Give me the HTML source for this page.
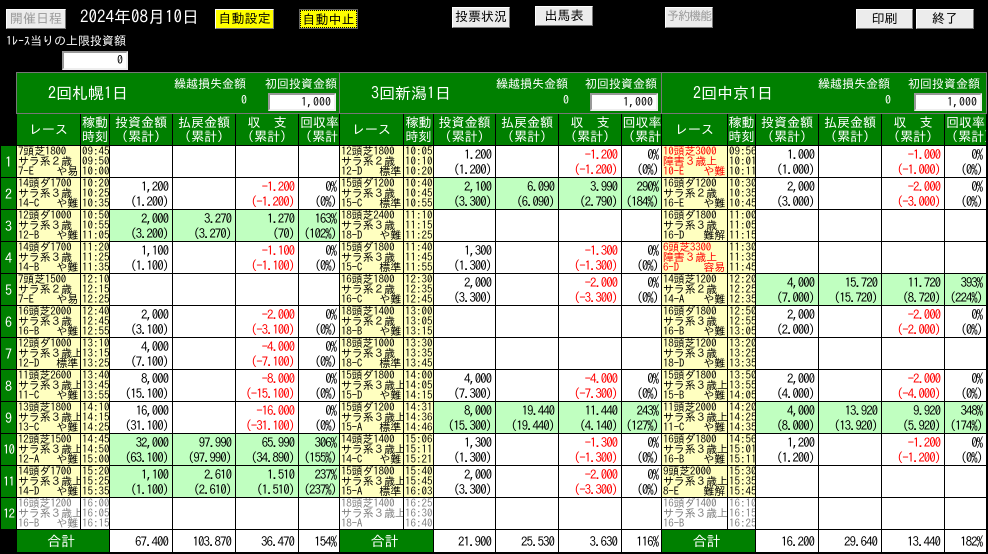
<!DOCTYPE html>
<html><head><meta charset="utf-8"><style>
body{margin:0;background:#000;width:988px;height:554px;overflow:hidden;position:relative;font-family:"IPAGothic","Noto Sans CJK JP",monospace;color:#000}
.a{position:absolute;white-space:nowrap}
.btn{position:absolute;background:#ececec;border:1px solid #fff;border-right-color:#777;border-bottom-color:#777;font-size:13px;text-align:center;line-height:17px;box-sizing:border-box;white-space:nowrap}
.inp{position:absolute;background:#fff;border:2px solid #999;border-right-color:#eee;border-bottom-color:#eee;box-sizing:border-box;text-align:right;font-size:12px;line-height:14px;padding-right:3px}
table.p{position:absolute;top:72px;border-collapse:collapse;table-layout:fixed}
td{border:1px solid #000;padding:0;overflow:hidden;white-space:nowrap;background:#fff}
tr.v td{background:#008000;height:40px;border:1px solid #777;position:relative;color:#fff}
tr.h td{background:#008000;color:#fff;height:31px;font-size:13px;line-height:14px;text-align:center}
tr.d td{height:31px;font-size:13px;letter-spacing:-1.1px;line-height:15px;text-align:right;padding-right:4px}
td.r{background:#ffffc0!important;font-size:11px!important;letter-spacing:-0.2px!important;line-height:10px!important;text-align:left!important;padding:0 0 0 1px!important;vertical-align:middle}
td.t{background:#ffffc0!important;font-size:11px!important;letter-spacing:0!important;line-height:10px!important;text-align:left!important;padding:0 0 0 1px!important;vertical-align:middle}
td.r i{float:right;font-style:normal;padding-right:2px}
tr.d td.g{background:#c0ffc0}
.e{color:#f00}
td.gy{color:#808080;background:#fff!important}
tr.tot td{height:22px;font-size:13px;letter-spacing:-1px;text-align:right;padding-right:4px}
tr.tot td.s{background:#008000;color:#fff;text-align:center;letter-spacing:0;font-size:14px}
table.n{position:absolute;left:0;top:145px;border-collapse:collapse}
table.n td{background:#008000;color:#fff;width:15px;height:31px;text-align:center;font-size:14px;padding:0}
</style></head><body>
<div class="btn" style="left:6px;top:9px;width:60px;height:20px;color:#999">開催日程</div>
<div class="a" style="left:80px;top:8px;color:#fff;font-size:17px;line-height:20px">2024年08月10日</div>
<div class="btn" style="left:215px;top:9px;width:59px;height:20px;background:#ff0">自動設定</div>
<div class="btn" style="left:300px;top:10px;width:57px;height:18px;background:#ff0;border:1px dotted #000;outline:1px solid #666">自動中止</div>
<div class="btn" style="left:452px;top:7px;width:58px;height:21px">投票状況</div>
<div class="btn" style="left:535px;top:6px;width:58px;height:20px">出馬表</div>
<div class="btn" style="left:665px;top:7px;width:48px;height:21px;color:#999;font-size:12px;letter-spacing:-1px">予約機能</div>
<div class="btn" style="left:856px;top:9px;width:57px;height:20px">印刷</div>
<div class="btn" style="left:916px;top:9px;width:58px;height:20px">終了</div>
<div class="a" style="left:6px;top:35px;color:#fff;font-size:12px">1ﾚｰｽ当りの上限投資額</div>
<div class="inp" style="left:62px;top:51px;width:66px;height:19px">0</div>

<table class="n"><tr><td>1</td></tr><tr><td>2</td></tr><tr><td>3</td></tr><tr><td>4</td></tr><tr><td>5</td></tr><tr><td>6</td></tr><tr><td>7</td></tr><tr><td>8</td></tr><tr><td>9</td></tr><tr><td style="font-size:13px;letter-spacing:-1px">10</td></tr><tr><td style="font-size:13px;letter-spacing:-1px">11</td></tr><tr><td style="font-size:13px;letter-spacing:-1px">12</td></tr></table>

<!-- Panel 1 -->
<table class="p" style="left:16px;width:324px">
<colgroup><col style="width:64px"><col style="width:29px"><col style="width:63px"><col style="width:63px"><col style="width:63px"><col style="width:42px"></colgroup>
<tr class="v"><td colspan="6"><div class="a" style="left:31px;top:12px;font-size:16px">2回札幌1日</div><div class="a" style="left:157px;top:5px;font-size:12px">繰越損失金額</div><div class="a" style="left:224px;top:21px;font-size:12px">0</div><div class="a" style="left:248px;top:5px;font-size:12px">初回投資金額</div><div class="inp" style="left:251px;top:20px;width:68px;height:18px;color:#000">1,000</div></td></tr>
<tr class="h"><td>レース</td><td>稼動<br>時刻</td><td>投資金額<br>（累計）</td><td>払戻金額<br>（累計）</td><td>収　支<br>（累計）</td><td>回収率<br>（累計）</td></tr>
<tr class="d"><td class="r">7頭芝1800<br>サラ系２歳<br>7-E<i>や易</i></td><td class="t">09:45<br>09:50<br>10:00</td><td></td><td></td><td></td><td></td></tr>
<tr class="d"><td class="r">14頭ダ1700<br>サラ系３歳<br>14-C<i>や難</i></td><td class="t">10:20<br>10:25<br>10:35</td><td>1,200<br>(1.200)</td><td></td><td class="e">-1.200<br>(-1.200)</td><td>0%<br>(0%)</td></tr>
<tr class="d"><td class="r">12頭ダ1000<br>サラ系３歳<br>12-B<i>や難</i></td><td class="t">10:50<br>10:55<br>11:05</td><td class="g">2,000<br>(3.200)</td><td class="g">3.270<br>(3.270)</td><td class="g">1.270<br>(70)</td><td class="g">163%<br>(102%)</td></tr>
<tr class="d"><td class="r">14頭ダ1700<br>サラ系３歳<br>14-B<i>や難</i></td><td class="t">11:20<br>11:25<br>11:35</td><td>1,100<br>(1.100)</td><td></td><td class="e">-1.100<br>(-1.100)</td><td>0%<br>(0%)</td></tr>
<tr class="d"><td class="r">7頭芝1500<br>サラ系２歳<br>7-E<i>や易</i></td><td class="t">12:10<br>12:15<br>12:25</td><td></td><td></td><td></td><td></td></tr>
<tr class="d"><td class="r">16頭芝2000<br>サラ系３歳<br>16-B<i>や難</i></td><td class="t">12:40<br>12:45<br>12:55</td><td>2,000<br>(3.100)</td><td></td><td class="e">-2.000<br>(-3.100)</td><td>0%<br>(0%)</td></tr>
<tr class="d"><td class="r">12頭ダ1000<br>サラ系３歳上<br>12-D<i>標準</i></td><td class="t">13:10<br>13:15<br>13:25</td><td>4,000<br>(7.100)</td><td></td><td class="e">-4.000<br>(-7.100)</td><td>0%<br>(0%)</td></tr>
<tr class="d"><td class="r">11頭芝2600<br>サラ系３歳上<br>11-C<i>や難</i></td><td class="t">13:40<br>13:45<br>13:55</td><td>8,000<br>(15.100)</td><td></td><td class="e">-8.000<br>(-15.100)</td><td>0%<br>(0%)</td></tr>
<tr class="d"><td class="r">13頭芝1800<br>サラ系３歳上<br>13-C<i>や難</i></td><td class="t">14:10<br>14:15<br>14:25</td><td>16,000<br>(31.100)</td><td></td><td class="e">-16.000<br>(-31.100)</td><td>0%<br>(0%)</td></tr>
<tr class="d"><td class="r">12頭芝1500<br>サラ系３歳上<br>12-A<i>や難</i></td><td class="t">14:45<br>14:50<br>15:00</td><td class="g">32,000<br>(63.100)</td><td class="g">97.990<br>(97.990)</td><td class="g">65.990<br>(34.890)</td><td class="g">306%<br>(155%)</td></tr>
<tr class="d"><td class="r">14頭ダ1700<br>サラ系３歳上<br>14-D<i>や難</i></td><td class="t">15:20<br>15:25<br>15:35</td><td class="g">1,100<br>(1.100)</td><td class="g">2.610<br>(2.610)</td><td class="g">1.510<br>(1.510)</td><td class="g">237%<br>(237%)</td></tr>
<tr class="d"><td class="r gy">16頭芝1200<br>サラ系３歳上<br>16-B<i>や難</i></td><td class="t gy">16:00<br>16:05<br>16:15</td><td></td><td></td><td></td><td></td></tr>
<tr class="tot"><td class="s" colspan="2">合計</td><td>67.400</td><td>103.870</td><td>36.470</td><td>154%</td></tr>
</table>

<!-- Panel 2 -->
<table class="p" style="left:339px;width:323px">
<colgroup><col style="width:64px"><col style="width:30px"><col style="width:62px"><col style="width:63px"><col style="width:63px"><col style="width:41px"></colgroup>
<tr class="v"><td colspan="6"><div class="a" style="left:31px;top:12px;font-size:16px">3回新潟1日</div><div class="a" style="left:156px;top:5px;font-size:12px">繰越損失金額</div><div class="a" style="left:223px;top:21px;font-size:12px">0</div><div class="a" style="left:245px;top:5px;font-size:12px">初回投資金額</div><div class="inp" style="left:250px;top:20px;width:68px;height:18px;color:#000">1,000</div></td></tr>
<tr class="h"><td>レース</td><td>稼動<br>時刻</td><td>投資金額<br>（累計）</td><td>払戻金額<br>（累計）</td><td>収　支<br>（累計）</td><td>回収率<br>（累計）</td></tr>
<tr class="d"><td class="r">12頭芝1800<br>サラ系２歳<br>12-D<i>標準</i></td><td class="t">10:05<br>10:10<br>10:20</td><td>1.200<br>(1.200)</td><td></td><td class="e">-1.200<br>(-1.200)</td><td>0%<br>(0%)</td></tr>
<tr class="d"><td class="r">15頭ダ1200<br>サラ系３歳<br>15-C<i>標準</i></td><td class="t">10:40<br>10:45<br>10:55</td><td class="g">2,100<br>(3.300)</td><td class="g">6.090<br>(6.090)</td><td class="g">3.990<br>(2.790)</td><td class="g">290%<br>(184%)</td></tr>
<tr class="d"><td class="r">18頭芝2400<br>サラ系３歳<br>18-D<i>や難</i></td><td class="t">11:10<br>11:15<br>11:25</td><td></td><td></td><td></td><td></td></tr>
<tr class="d"><td class="r">15頭ダ1800<br>サラ系３歳<br>15-C<i>標準</i></td><td class="t">11:40<br>11:45<br>11:55</td><td>1,300<br>(1.300)</td><td></td><td class="e">-1.300<br>(-1.300)</td><td>0%<br>(0%)</td></tr>
<tr class="d"><td class="r">16頭芝1800<br>サラ系２歳<br>16-C<i>や難</i></td><td class="t">12:30<br>12:35<br>12:45</td><td>2,000<br>(3.300)</td><td></td><td class="e">-2.000<br>(-3.300)</td><td>0%<br>(0%)</td></tr>
<tr class="d"><td class="r">18頭芝1400<br>サラ系２歳<br>18-B<i>や難</i></td><td class="t">13:00<br>13:05<br>13:15</td><td></td><td></td><td></td><td></td></tr>
<tr class="d"><td class="r">18頭芝1000<br>サラ系３歳<br>18-C<i>標準</i></td><td class="t">13:30<br>13:35<br>13:45</td><td></td><td></td><td></td><td></td></tr>
<tr class="d"><td class="r">15頭ダ1800<br>サラ系３歳上<br>15-D<i>や難</i></td><td class="t">14:00<br>14:05<br>14:15</td><td>4,000<br>(7.300)</td><td></td><td class="e">-4.000<br>(-7.300)</td><td>0%<br>(0%)</td></tr>
<tr class="d"><td class="r">15頭ダ1200<br>サラ系３歳上<br>15-A<i>標準</i></td><td class="t">14:31<br>14:36<br>14:46</td><td class="g">8,000<br>(15.300)</td><td class="g">19.440<br>(19.440)</td><td class="g">11.440<br>(4.140)</td><td class="g">243%<br>(127%)</td></tr>
<tr class="d"><td class="r">14頭芝1400<br>サラ系３歳上<br>14-C<i>や難</i></td><td class="t">15:06<br>15:11<br>15:21</td><td>1,300<br>(1.300)</td><td></td><td class="e">-1.300<br>(-1.300)</td><td>0%<br>(0%)</td></tr>
<tr class="d"><td class="r">15頭ダ1800<br>サラ系３歳上<br>15-A<i>標準</i></td><td class="t">15:40<br>15:45<br>16:03</td><td>2,000<br>(3.300)</td><td></td><td class="e">-2.000<br>(-3.300)</td><td>0%<br>(0%)</td></tr>
<tr class="d"><td class="r gy">18頭芝1400<br>サラ系３歳上<br>18-A</td><td class="t gy">16:25<br>16:30<br>16:40</td><td></td><td></td><td></td><td></td></tr>
<tr class="tot"><td class="s" colspan="2">合計</td><td>21.900</td><td>25.530</td><td>3.630</td><td>116%</td></tr>
</table>

<!-- Panel 3 -->
<table class="p" style="left:661px;width:325px">
<colgroup><col style="width:66px"><col style="width:28px"><col style="width:63px"><col style="width:63px"><col style="width:63px"><col style="width:42px"></colgroup>
<tr class="v"><td colspan="6"><div class="a" style="left:31px;top:12px;font-size:16px">2回中京1日</div><div class="a" style="left:156px;top:5px;font-size:12px">繰越損失金額</div><div class="a" style="left:223px;top:21px;font-size:12px">0</div><div class="a" style="left:246px;top:5px;font-size:12px">初回投資金額</div><div class="inp" style="left:252px;top:20px;width:68px;height:18px;color:#000">1,000</div></td></tr>
<tr class="h"><td>レース</td><td>稼動<br>時刻</td><td>投資金額<br>（累計）</td><td>払戻金額<br>（累計）</td><td>収　支<br>（累計）</td><td>回収率<br>（累計）</td></tr>
<tr class="d"><td class="r e">10頭芝3000<br>障害３歳上<br>10-E<i>や難</i></td><td class="t">09:56<br>10:01<br>10:11</td><td>1.000<br>(1.000)</td><td></td><td class="e">-1.000<br>(-1.000)</td><td>0%<br>(0%)</td></tr>
<tr class="d"><td class="r">16頭ダ1200<br>サラ系２歳<br>16-E<i>や難</i></td><td class="t">10:30<br>10:35<br>10:45</td><td>2,000<br>(3.000)</td><td></td><td class="e">-2.000<br>(-3.000)</td><td>0%<br>(0%)</td></tr>
<tr class="d"><td class="r">16頭ダ1800<br>サラ系３歳<br>16-D<i>難解</i></td><td class="t">11:00<br>11:05<br>11:15</td><td></td><td></td><td></td><td></td></tr>
<tr class="d"><td class="r e">6頭芝3300<br>障害３歳上<br>6-D<i>容易</i></td><td class="t">11:30<br>11:35<br>11:45</td><td></td><td></td><td></td><td></td></tr>
<tr class="d"><td class="r">14頭芝1200<br>サラ系２歳<br>14-A<i>や難</i></td><td class="t">12:20<br>12:25<br>12:35</td><td class="g">4,000<br>(7.000)</td><td class="g">15.720<br>(15.720)</td><td class="g">11.720<br>(8.720)</td><td class="g">393%<br>(224%)</td></tr>
<tr class="d"><td class="r">16頭ダ1800<br>サラ系３歳<br>16-B<i>や難</i></td><td class="t">12:50<br>12:55<br>13:05</td><td>2,000<br>(2.000)</td><td></td><td class="e">-2.000<br>(-2.000)</td><td>0%<br>(0%)</td></tr>
<tr class="d"><td class="r">18頭芝1200<br>サラ系３歳<br>18-D<i>や難</i></td><td class="t">13:20<br>13:25<br>13:35</td><td></td><td></td><td></td><td></td></tr>
<tr class="d"><td class="r">15頭ダ1800<br>サラ系３歳上<br>15-B<i>や難</i></td><td class="t">13:50<br>13:55<br>14:05</td><td>2,000<br>(4.000)</td><td></td><td class="e">-2.000<br>(-4.000)</td><td>0%<br>(0%)</td></tr>
<tr class="d"><td class="r">11頭芝2000<br>サラ系３歳上<br>11-C<i>や難</i></td><td class="t">14:20<br>14:25<br>14:35</td><td class="g">4,000<br>(8.000)</td><td class="g">13.920<br>(13.920)</td><td class="g">9.920<br>(5.920)</td><td class="g">348%<br>(174%)</td></tr>
<tr class="d"><td class="r">16頭ダ1800<br>サラ系３歳上<br>16-B<i>や難</i></td><td class="t">14:56<br>15:01<br>15:11</td><td>1,200<br>(1.200)</td><td></td><td class="e">-1.200<br>(-1.200)</td><td>0%<br>(0%)</td></tr>
<tr class="d"><td class="r">9頭芝2000<br>サラ系３歳上<br>8-E<i>難解</i></td><td class="t">15:30<br>15:35<br>15:45</td><td></td><td></td><td></td><td></td></tr>
<tr class="d"><td class="r gy">16頭ダ1400<br>サラ系３歳上<br>16-B</td><td class="t gy">16:10<br>16:15<br>16:25</td><td></td><td></td><td></td><td></td></tr>
<tr class="tot"><td class="s" colspan="2">合計</td><td>16.200</td><td>29.640</td><td>13.440</td><td>182%</td></tr>
</table>
</body></html>
